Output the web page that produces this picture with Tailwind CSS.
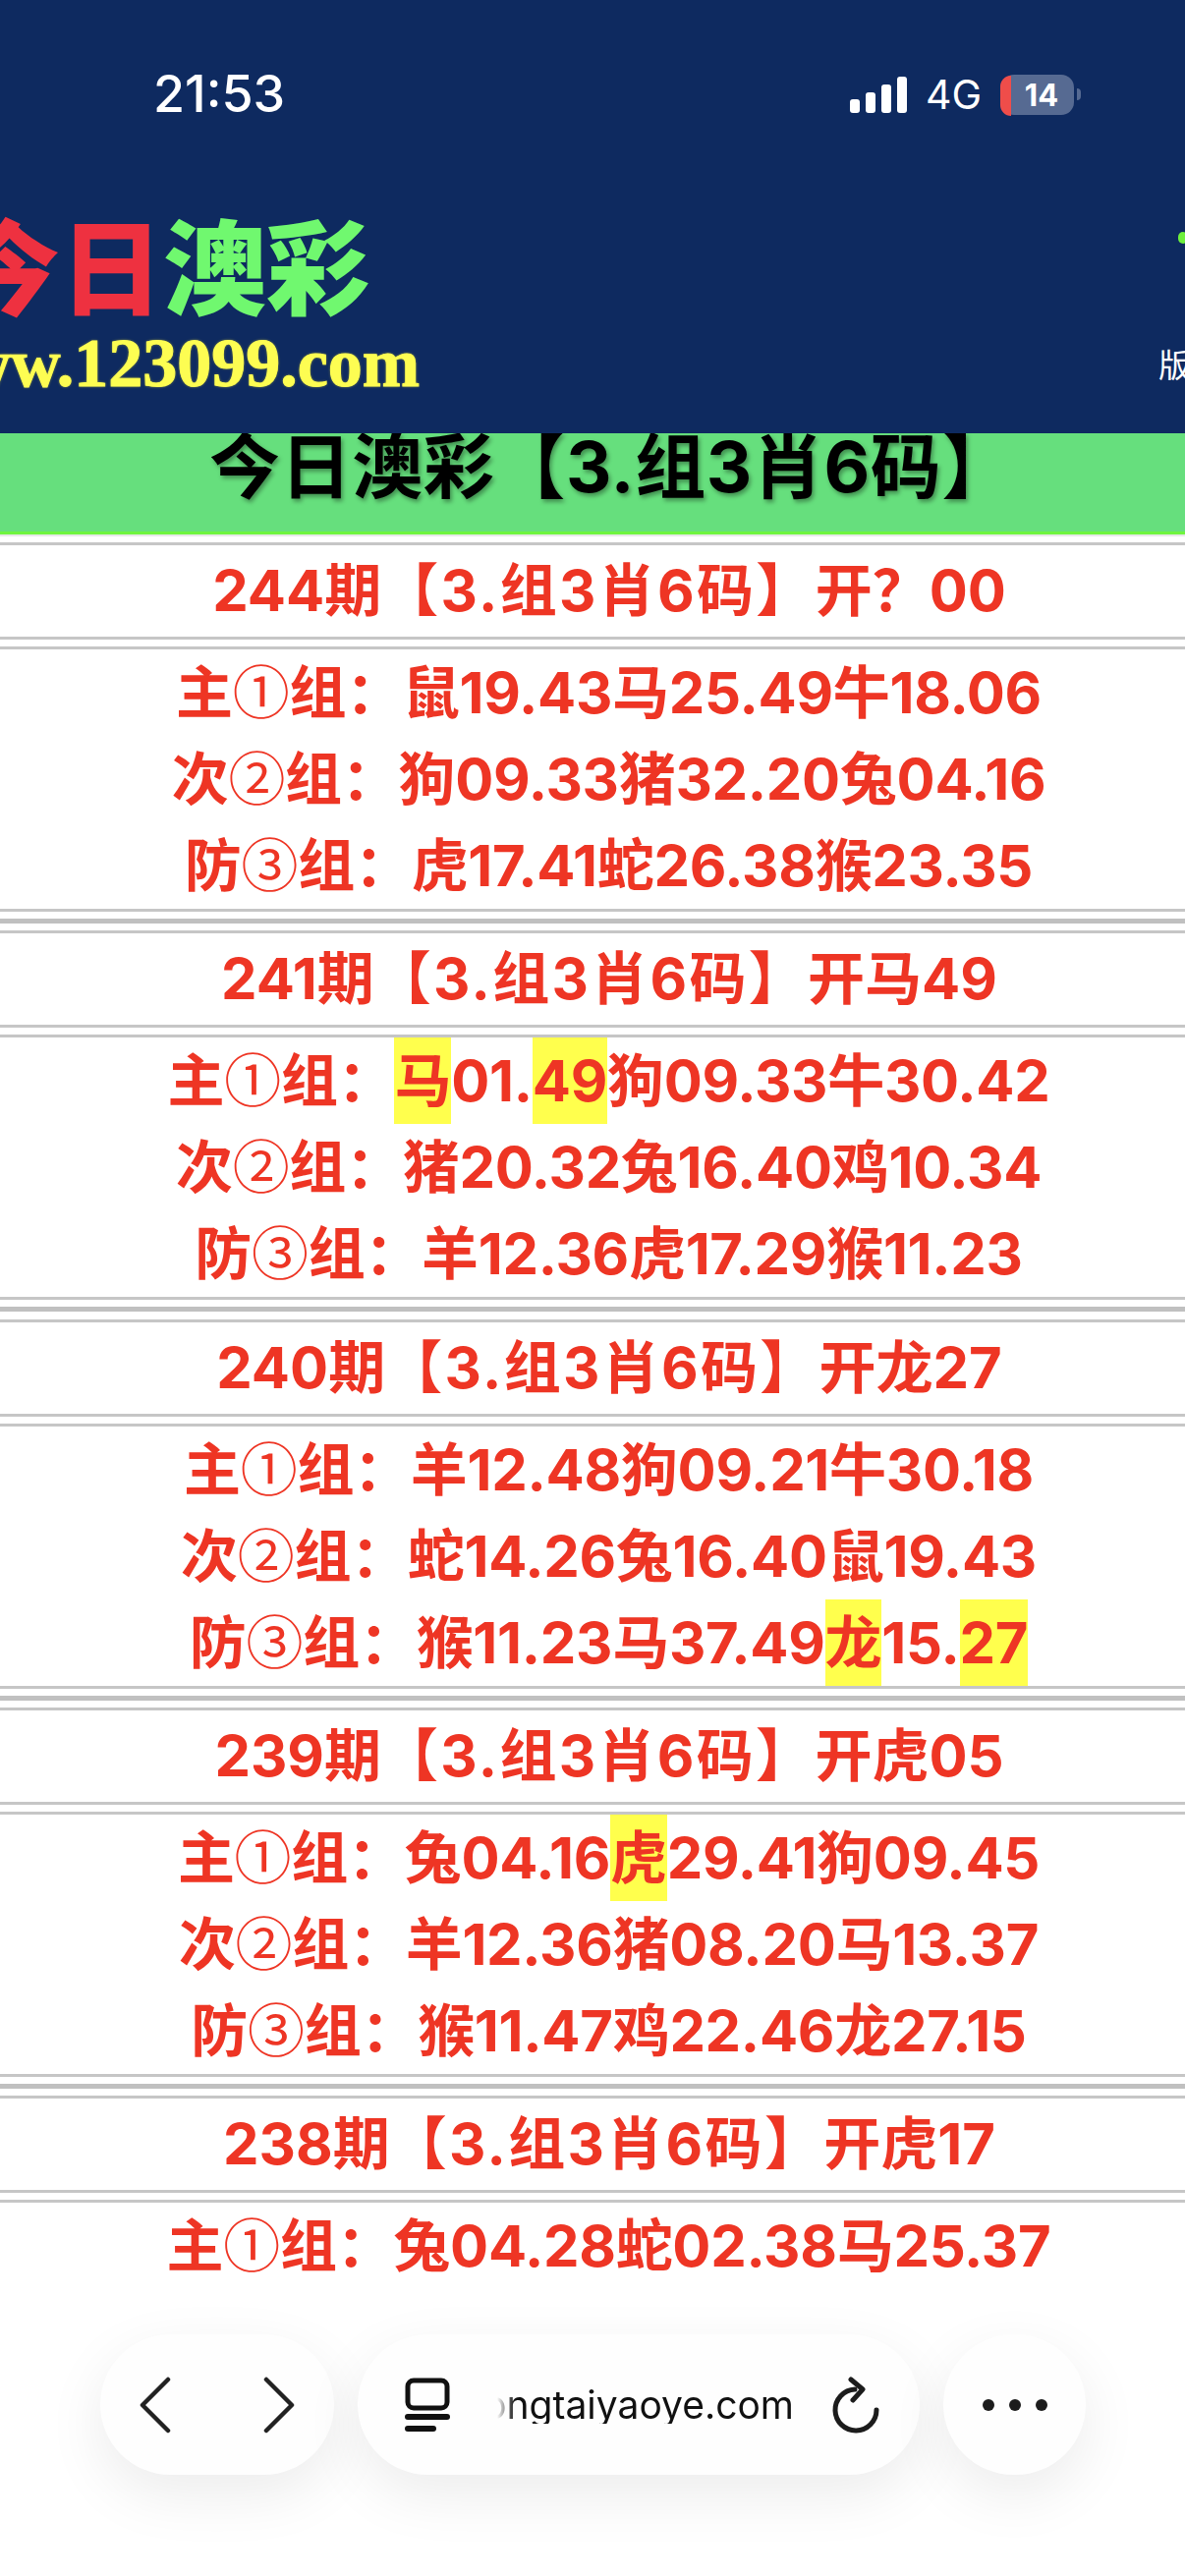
<!DOCTYPE html>
<html>
  <head>
    <meta charset="UTF-8" />
    <meta name="viewport" content="width=device-width, initial-scale=1.0" />
    <title>今日澳彩</title>
    <script src="https://cdn.jsdelivr.net/npm/@tailwindcss/browser@4"></script>
  </head>
  <body class="bg-white font-[Inter,'Noto_Sans_CJK_SC',sans-serif]">
    <main class="relative h-[2622px] w-[1206px] overflow-hidden">
      <!-- header -->
      <header class="relative h-[441px] overflow-hidden bg-[#0e2a60]">
        <div class="h-[73px]"></div>
        <div class="flex h-[46px] items-center justify-between pr-[106px] pl-[156px] text-white">
          <span class="text-[52px] leading-none font-medium">21:53</span>
          <div class="flex items-center">
            <div class="flex items-end gap-[6px]">
              <i class="h-[14px] w-[10px] rounded-[3px] bg-white"></i>
              <i class="h-[21px] w-[10px] rounded-[3px] bg-white"></i>
              <i class="h-[29px] w-[10px] rounded-[3px] bg-white"></i>
              <i class="h-[37px] w-[10px] rounded-[3px] bg-white"></i>
            </div>
            <span class="ml-[19px] text-[41px] leading-none font-normal">4G</span>
            <div class="ml-[20px] flex h-[41px] w-[74px] items-center justify-center overflow-hidden rounded-[13px] bg-[#566a92] pl-[8px]">
              <span class="text-[31px] leading-none font-bold">14</span>
            </div>
            <i class="ml-[3px] h-[12px] w-[4px] rounded-r-full bg-[#566a92]"></i>
          </div>
        </div>
        <div class="ml-[-44px] mt-[99px] h-[123px] whitespace-nowrap text-[105px] leading-[112px] font-black">
          <span class="text-[#ee3140]">今日</span><span class="text-[#70f86f]">澳彩</span>
        </div>
        <div class="ml-[-90px] whitespace-nowrap font-['Liberation_Serif',serif] text-[70px] leading-[58px] font-bold text-[#fdfd52] [-webkit-text-stroke:1px_#fdfd52] [text-shadow:0_0_3px_#a8a83a]">www.123099.com</div>
        <span class="absolute top-[356px] left-[1179px] text-[33px] leading-none font-normal text-white">版</span>
        <i class="absolute top-[236px] left-[1199px] h-[12px] w-[10px] rounded-full bg-[#6ef03c]"></i>
        <!-- red cap of the battery, sits over the pill -->
        <i class="absolute top-[77px] left-[1018px] h-[41px] w-[11px] rounded-l-[13px] bg-[#ef4d4a]"></i>
      </header>

      <!-- title bar -->
      <div class="h-[103px] overflow-hidden border-b-[3px] border-[#6ff53f] bg-[#66df7d] pl-[38px] text-center text-[72px] leading-[68px] font-bold tracking-[0.6px] text-black [text-shadow:2px_3px_4px_rgba(0,0,0,0.35)]">今日澳彩【3.组3肖6码】</div>
      <div class="h-[2px] bg-[#e8e8e8]"></div>
      <div class="h-[6px]"></div>

      <div class="text-center text-[58px] font-bold text-[#ee3524]">
        <!-- 244 -->
        <section>
          <div class="h-[3px] bg-[#c6c6c6]"></div>
          <h2 class="h-[93px] pl-[34px] leading-[93px]">244期<span class="tracking-[2.3px]">【3.组3肖6码】</span>开？00</h2>
          <div class="h-[3px] bg-[#c6c6c6]"></div>
          <div class="h-[7px]"></div>
          <div class="h-[3px] bg-[#c6c6c6]"></div>
          <p class="h-[88px] pl-[33px] leading-[88px] tracking-[-0.3px]">主<span class="font-['Noto_Sans_CJK_SC'] leading-none font-normal">①</span>组：鼠19.43马25.49牛18.06</p>
          <p class="h-[88px] pl-[33px] leading-[88px] tracking-[-0.3px]">次<span class="font-['Noto_Sans_CJK_SC'] leading-none font-normal">②</span>组：狗09.33猪32.20兔04.16</p>
          <p class="h-[88px] pl-[33px] leading-[88px] tracking-[-0.3px]">防<span class="font-['Noto_Sans_CJK_SC'] leading-none font-normal">③</span>组：虎17.41蛇26.38猴23.35</p>
          <div class="h-[3px] bg-[#c6c6c6]"></div>
          <div class="h-[7px]"></div>
          <div class="h-[5px] bg-[#c0c0c0]"></div>
          <div class="h-[7.25px]"></div>
        </section>
        <!-- 241 -->
        <section>
          <div class="h-[3px] bg-[#c6c6c6]"></div>
          <h2 class="h-[93px] pl-[34px] leading-[93px]">241期<span class="tracking-[2.3px]">【3.组3肖6码】</span>开马49</h2>
          <div class="h-[3px] bg-[#c6c6c6]"></div>
          <div class="h-[7px]"></div>
          <div class="h-[3px] bg-[#c6c6c6]"></div>
          <p class="h-[88px] pl-[33px] leading-[88px] tracking-[-0.3px]">主<span class="font-['Noto_Sans_CJK_SC'] leading-none font-normal">①</span>组：<span class="inline-block bg-[#ffff4d]">马</span>01.<span class="inline-block bg-[#ffff4d]">49</span>狗09.33牛30.42</p>
          <p class="h-[88px] pl-[33px] leading-[88px] tracking-[-0.3px]">次<span class="font-['Noto_Sans_CJK_SC'] leading-none font-normal">②</span>组：猪20.32兔16.40鸡10.34</p>
          <p class="h-[88px] pl-[33px] leading-[88px] tracking-[-0.3px]">防<span class="font-['Noto_Sans_CJK_SC'] leading-none font-normal">③</span>组：羊12.36虎17.29猴11.23</p>
          <div class="h-[3px] bg-[#c6c6c6]"></div>
          <div class="h-[7px]"></div>
          <div class="h-[5px] bg-[#c0c0c0]"></div>
          <div class="h-[7.25px]"></div>
        </section>
        <!-- 240 -->
        <section>
          <div class="h-[3px] bg-[#c6c6c6]"></div>
          <h2 class="h-[93px] pl-[34px] leading-[93px]">240期<span class="tracking-[2.3px]">【3.组3肖6码】</span>开龙27</h2>
          <div class="h-[3px] bg-[#c6c6c6]"></div>
          <div class="h-[7px]"></div>
          <div class="h-[3px] bg-[#c6c6c6]"></div>
          <p class="h-[88px] pl-[33px] leading-[88px] tracking-[-0.3px]">主<span class="font-['Noto_Sans_CJK_SC'] leading-none font-normal">①</span>组：羊12.48狗09.21牛30.18</p>
          <p class="h-[88px] pl-[33px] leading-[88px] tracking-[-0.3px]">次<span class="font-['Noto_Sans_CJK_SC'] leading-none font-normal">②</span>组：蛇14.26兔16.40鼠19.43</p>
          <p class="h-[88px] pl-[33px] leading-[88px] tracking-[-0.3px]">防<span class="font-['Noto_Sans_CJK_SC'] leading-none font-normal">③</span>组：猴11.23马37.49<span class="inline-block bg-[#ffff4d]">龙</span>15.<span class="inline-block bg-[#ffff4d]">27</span></p>
          <div class="h-[3px] bg-[#c6c6c6]"></div>
          <div class="h-[7px]"></div>
          <div class="h-[5px] bg-[#c0c0c0]"></div>
          <div class="h-[7.25px]"></div>
        </section>
        <!-- 239 -->
        <section>
          <div class="h-[3px] bg-[#c6c6c6]"></div>
          <h2 class="h-[93px] pl-[34px] leading-[93px]">239期<span class="tracking-[2.3px]">【3.组3肖6码】</span>开虎05</h2>
          <div class="h-[3px] bg-[#c6c6c6]"></div>
          <div class="h-[7px]"></div>
          <div class="h-[3px] bg-[#c6c6c6]"></div>
          <p class="h-[88px] pl-[33px] leading-[88px] tracking-[-0.3px]">主<span class="font-['Noto_Sans_CJK_SC'] leading-none font-normal">①</span>组：兔04.16<span class="inline-block bg-[#ffff4d]">虎</span>29.41狗09.45</p>
          <p class="h-[88px] pl-[33px] leading-[88px] tracking-[-0.3px]">次<span class="font-['Noto_Sans_CJK_SC'] leading-none font-normal">②</span>组：羊12.36猪08.20马13.37</p>
          <p class="h-[88px] pl-[33px] leading-[88px] tracking-[-0.3px]">防<span class="font-['Noto_Sans_CJK_SC'] leading-none font-normal">③</span>组：猴11.47鸡22.46龙27.15</p>
          <div class="h-[3px] bg-[#c6c6c6]"></div>
          <div class="h-[7px]"></div>
          <div class="h-[5px] bg-[#c0c0c0]"></div>
          <div class="h-[7.25px]"></div>
        </section>
        <!-- 238 -->
        <section>
          <div class="h-[3px] bg-[#c6c6c6]"></div>
          <h2 class="h-[93px] pl-[34px] leading-[93px]">238期<span class="tracking-[2.3px]">【3.组3肖6码】</span>开虎17</h2>
          <div class="h-[3px] bg-[#c6c6c6]"></div>
          <div class="h-[7px]"></div>
          <div class="h-[3px] bg-[#c6c6c6]"></div>
          <p class="h-[88px] pl-[33px] leading-[88px] tracking-[-0.3px]">主<span class="font-['Noto_Sans_CJK_SC'] leading-none font-normal">①</span>组：兔04.28蛇02.38马25.37</p>
        </section>
      </div>

      <!-- browser toolbar -->
      <nav class="absolute top-[2376px] left-[102px] flex h-[143px] gap-[24px]">
        <div class="flex w-[238px] items-center justify-between rounded-full bg-[#fefefe] pr-[40px] pl-[40px] shadow-[0_20px_60px_rgba(0,0,0,0.08)]">
          <svg width="32" height="60" viewBox="0 0 32 60" fill="none" stroke="#222" stroke-width="4.5" stroke-linecap="round" stroke-linejoin="round"><path d="M29 4 L3 30 L29 56"/></svg>
          <svg width="32" height="60" viewBox="0 0 32 60" fill="none" stroke="#222" stroke-width="4.5" stroke-linecap="round" stroke-linejoin="round"><path d="M3 4 L29 30 L3 56"/></svg>
        </div>
        <div class="flex w-[572px] items-center rounded-full bg-[#fefefe] pl-[48px] shadow-[0_20px_60px_rgba(0,0,0,0.08)]">
          <svg width="46" height="56" viewBox="0 0 46 56" fill="none" class="shrink-0"><rect x="3" y="3" width="40" height="28" rx="6" stroke="#111" stroke-width="5"/><rect x="0" y="37" width="46" height="6" rx="3" fill="#111"/><rect x="0" y="49" width="32" height="6" rx="3" fill="#111"/></svg>
          <div class="ml-[40px] flex w-[310px] justify-end overflow-hidden text-[39px] leading-none font-normal whitespace-nowrap text-[#111] [mask-image:linear-gradient(to_right,transparent_0px,transparent_8px,black_26px)]">ongtaiyaoye.com</div>
          <svg width="50" height="58" viewBox="0 0 50 58" fill="none" stroke="#1c1c1c" stroke-width="5" stroke-linecap="round" stroke-linejoin="round" class="ml-[38px]"><path d="M46 34 A21 21 0 1 1 24 13"/><path d="M20 3 L32 13 L22 24"/></svg>
        </div>
        <div class="flex w-[145px] items-center justify-center gap-[15px] rounded-full bg-[#fefefe] shadow-[0_20px_60px_rgba(0,0,0,0.08)]">
          <i class="h-[12px] w-[12px] rounded-full bg-[#1c1c1c]"></i>
          <i class="h-[12px] w-[12px] rounded-full bg-[#1c1c1c]"></i>
          <i class="h-[12px] w-[12px] rounded-full bg-[#1c1c1c]"></i>
        </div>
      </nav>
    </main>
  </body>
</html>
